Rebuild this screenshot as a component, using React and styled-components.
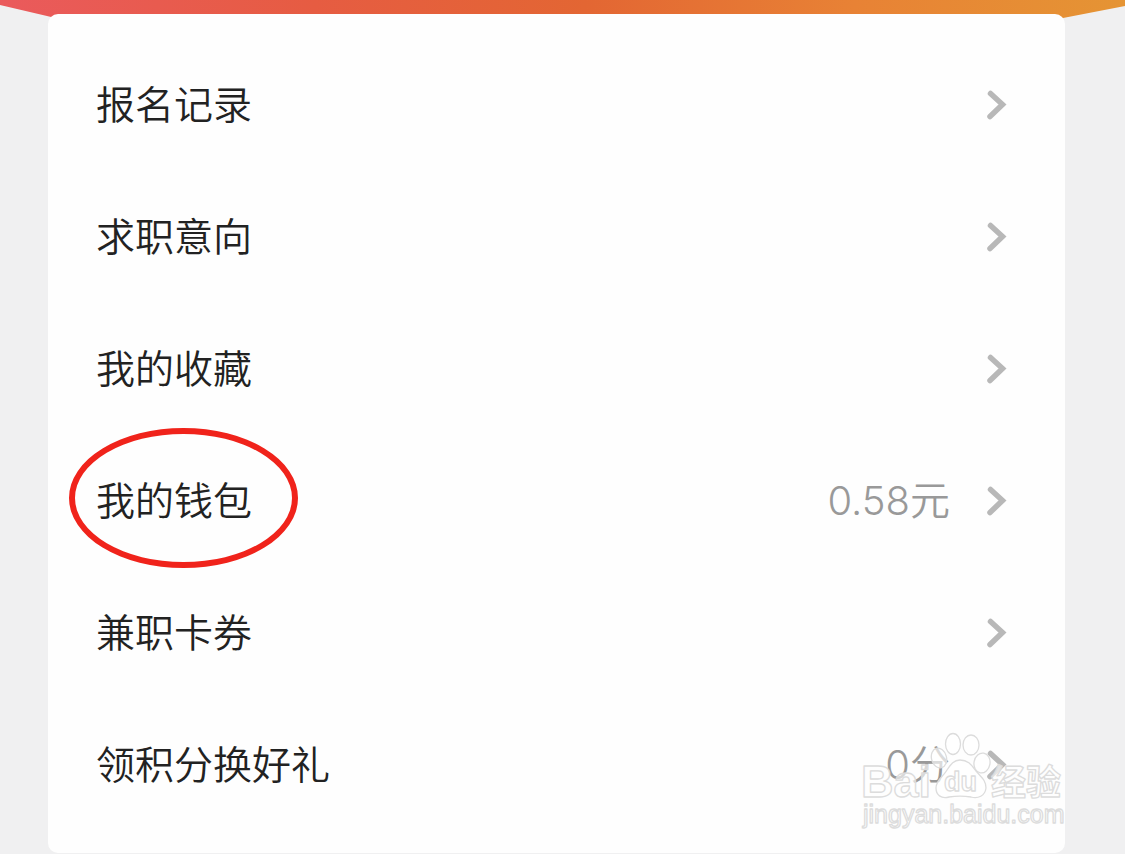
import * as React from 'react';
import styled, { createGlobalStyle } from 'styled-components';

const GlobalStyle = createGlobalStyle`
  *,
  *::after {
    box-sizing: border-box;
  }

  body {
    margin: 0;
    background-color: #f0f0f1;
    font-family: Inter, "Noto Sans CJK SC", sans-serif;
  }
`;

const Banner = styled.header`
  height: 20px;
  background: linear-gradient(90deg, #ea5a5c 0%, #e65c42 28%, #e36633 52%, #e88235 76%, #e59434 100%);
  clip-path: polygon(0 0, 100% 0, 100% 6px, calc(100% - 62px) 18px, 64px 100%, 0 5px);
`;

const Card = styled.main`
  position: relative;
  margin: -6px 60px 0 48px;
  padding: 25px 57px 22px 48px;
  background-color: #fefefe;
  border-radius: 10px;
`;

const Menu = styled.ul`
  margin: 0;
  padding: 0;
  list-style: none;
`;

const MenuLink = styled.a`
  display: flex;
  align-items: center;
  height: 132px;
  color: #222;
  text-decoration: none;
`;

const Label = styled.span`
  position: relative;
  font-size: 39px;
  font-weight: 350;
  line-height: 48px;

  &::after {
    content: '';
    display: ${({ $circled }) => ($circled ? 'block' : 'none')};
    position: absolute;
    top: -49px;
    left: -27px;
    width: 229px;
    height: 140px;
    border: 6px solid #f0231b;
    border-radius: 50%;
  }
`;

const Value = styled.span`
  margin-left: auto;
  margin-right: 34px;
  color: #999;
  font-size: 40px;
  font-weight: 350;
  line-height: 48px;
`;

const Arrow = styled.svg`
  flex: none;
  width: 24px;
  height: 32px;
  margin-left: ${({ $alone }) => ($alone ? 'auto' : '0')};
  fill: none;
  stroke: #b8b8b8;
  stroke-width: 5.5;
  stroke-linecap: round;
`;

const Watermark = styled.svg`
  position: absolute;
  right: 0;
  bottom: 20px;
  width: 204px;
  height: 102px;
  overflow: visible;
  pointer-events: none;
  fill: rgba(255, 255, 255, 0.65);
  stroke: #dcdcdc;
  stroke-width: 1.3;
  stroke-linejoin: round;
`;

const LogoText = styled.text`
  font-family: ${({ $cjk }) => ($cjk ? '"Noto Sans CJK SC", sans-serif' : '"Liberation Sans", sans-serif')};
  font-size: ${({ $size }) => $size}px;
  font-weight: ${({ $bold }) => ($bold ? 700 : 400)};
`;

const items = [
  { label: '报名记录' },
  { label: '求职意向' },
  { label: '我的收藏' },
  { label: '我的钱包', value: '0.58元', circled: true },
  { label: '兼职卡券' },
  { label: '领积分换好礼', value: '0分' },
];

const MenuItem = ({ label, value, circled }) => (
  <li>
    <MenuLink href="#">
      <Label $circled={circled}>{label}</Label>
      {value && <Value>{value}</Value>}
      <Arrow $alone={!value} viewBox="0 0 24 32" aria-hidden="true">
        <path d="M6.500 4.500 L18.500 15.500 L6 27.500" />
      </Arrow>
    </MenuLink>
  </li>
);

const BaiduMark = () => (
  <Watermark viewBox="0 0 204 102">
    <LogoText x="0" y="66" $size="45" $bold>Bai</LogoText>
    <ellipse cx="92" cy="13" rx="7.500" ry="10.500" />
    <ellipse cx="110" cy="14" rx="8" ry="10" />
    <ellipse cx="78" cy="27" rx="7.500" ry="10" transform="rotate(-15 78 27)" />
    <ellipse cx="121" cy="32" rx="8" ry="10" transform="rotate(10 121 32)" />
    <path d="M99 29 C108 29 111 35 115 40 C120 46 125 49 125 57 C124 65 117 68 110 66 C103 65 95 65 88 66 C80 68 75 64 75 57 C75 49 82 46 86 39 C90 33 93 29 99 29 Z" />
    <LogoText x="83" y="60" $size="27" $bold>du</LogoText>
    <LogoText x="130" y="64" $size="35" $bold $cjk>经验</LogoText>
    <LogoText x="2" y="92" $size="25">jingyan.baidu.com</LogoText>
  </Watermark>
);

export default function App() {
  return (
    <>
      <GlobalStyle />
      <Banner />
      <Card>
        <Menu>
          {items.map((item) => (
            <MenuItem key={item.label} {...item} />
          ))}
        </Menu>
        <BaiduMark />
      </Card>
    </>
  );
}
